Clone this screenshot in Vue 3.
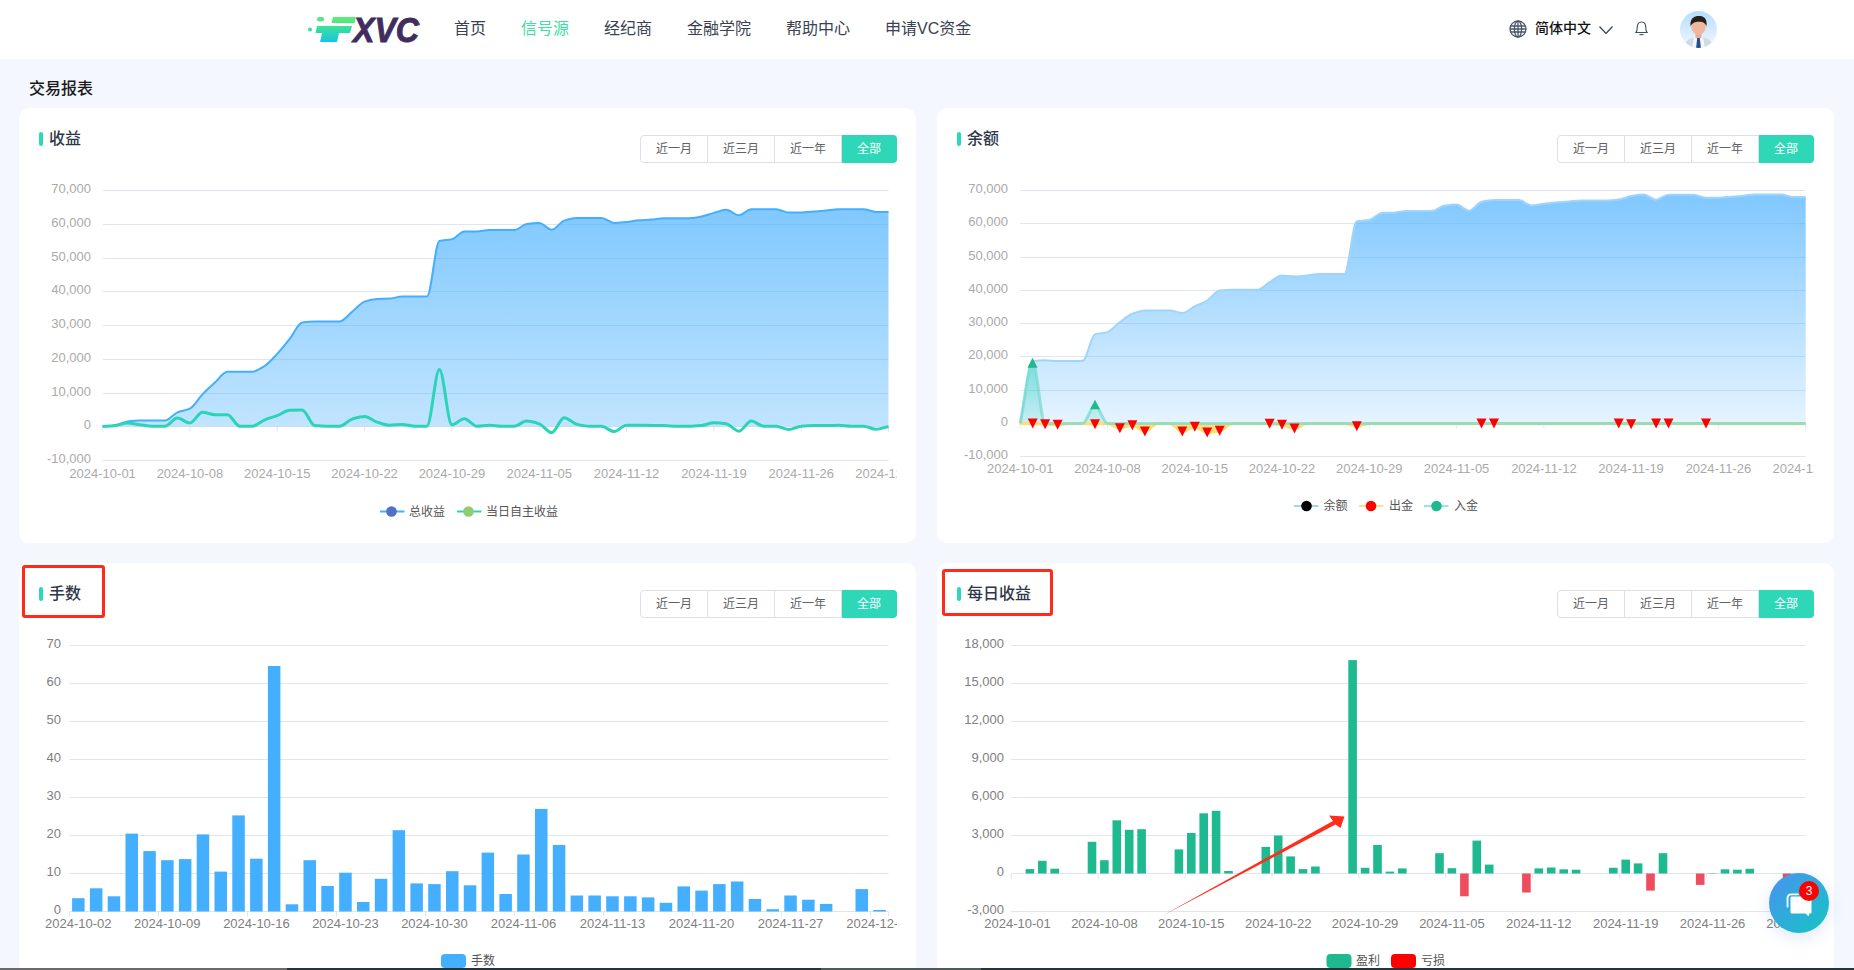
<script setup>
const tabs = ['近一月', '近三月', '近一年', '全部']
const nav = ['首页', '信号源', '经纪商', '金融学院', '帮助中心', '申请VC资金']
const days1 = ['10-01', '10-08', '10-15', '10-22', '10-29', '11-05', '11-12', '11-19', '11-26', '12-03']
const days3 = ['10-02', '10-09', '10-16', '10-23', '10-30', '11-06', '11-13', '11-20', '11-27', '12-04']

const r1 = (n) => Math.round(n * 10) / 10

function mono(pts) {
  const n = pts.length
  const s = []
  for (let i = 0; i < n - 1; i++) s.push((pts[i + 1][1] - pts[i][1]) / (pts[i + 1][0] - pts[i][0]))
  const m = [s[0]]
  for (let i = 1; i < n - 1; i++) m.push(s[i - 1] * s[i] <= 0 ? 0 : (2 * s[i - 1] * s[i]) / (s[i - 1] + s[i]))
  m.push(s[n - 2])
  let d = `M${r1(pts[0][0])} ${r1(pts[0][1])}`
  for (let i = 0; i < n - 1; i++) {
    const h = (pts[i + 1][0] - pts[i][0]) / 3
    d += `C${r1(pts[i][0] + h)} ${r1(pts[i][1] + m[i] * h)} ${r1(pts[i + 1][0] - h)} ${r1(pts[i + 1][1] - m[i + 1] * h)} ${r1(pts[i + 1][0])} ${r1(pts[i + 1][1])}`
  }
  return d
}

function axis(o) {
  const { left, right, top, bottom, labels, zeroIndex } = o
  const step = (bottom - top) / (labels.length - 1)
  const grid = labels.map((t, i) => ({ t, y: Math.round(top + step * i) + 0.5 }))
  return { grid, zeroY: grid[zeroIndex].y, left, right, top, bottom, step }
}

function lineSeries(ax, values, valuePerStep, extra) {
  const dx = (ax.right - ax.left) / (values.length - 1)
  const zero = ax.zeroY
  const pts = values.map((v, i) => [ax.left + dx * i, zero - (v / valuePerStep) * ax.step])
  const line = mono(pts)
  return {
    ...extra,
    line,
    area: `${line}L${r1(ax.right)} ${zero}L${r1(ax.left)} ${zero}Z`
  }
}

/* ---------- 收益 ---------- */
const totalA = [0, .3, 1.5, 1.8, 1.8, 1.8, 4.2, 5.3, 9.5, 13, 16.2, 16.2, 16.2, 18, 21.5, 26, 30.8, 31.1, 31.1, 31.1, 34, 37, 37.8, 37.9, 38.5, 38.5, 38.5, 55, 55.5, 57.8, 57.8, 58.2, 58.2, 58.2, 60, 60.3, 58.3, 61, 61.8, 61.8, 61.8, 60.3, 60.6, 61.1, 61.3, 61.7, 61.7, 61.7, 62.2, 63.3, 64.2, 62.6, 64.4, 64.4, 64.4, 63.4, 63.4, 63.7, 64, 64.4, 64.4, 64.4, 63.6, 63.6]
const dailyA = [0, .3, 1, .5, .1, .1, 2.5, 1, 4.2, 3.5, 3.5, .1, .1, 2, 3.2, 4.8, 4.9, .3, .1, .1, 2.2, 3, 1.3, .4, .6, .1, .1, 16.9, .5, 2.3, .1, .4, .1, .1, 1.6, .8, -1.8, 2.6, .7, .1, .1, -1.5, .4, .4, .3, .3, .05, .05, .3, 1.1, .8, -1.4, 1.6, .1, .1, -.9, .1, .3, .3, .35, .05, .05, -.8, 0]

/* ---------- 余额 ---------- */
const balance = [0, 18.8, 19, 18.8, 18.8, 18.8, 26.8, 27.5, 30.5, 33, 34, 34, 34, 33.2, 35.2, 37, 40, 40.2, 40.2, 40.2, 42.5, 44.5, 44.2, 44.5, 45, 45, 45, 60.8, 61.2, 63.3, 63.4, 63.9, 63.9, 63.9, 65.5, 65.9, 64, 66.7, 67.2, 67.2, 67.2, 65.6, 66.1, 66.5, 66.8, 67.1, 67.1, 67.1, 67.4, 68.4, 68.9, 67.3, 68.8, 68.8, 68.8, 67.9, 67.9, 68.2, 68.5, 68.9, 68.9, 68.9, 68.1, 68.1]
const depositValues = balance.map((_, i) => (i === 1 ? 18.5 : i === 6 ? 5.5 : 0))
const outMarks = [[1, 0], [2, .7], [3, 1.3], [6, .7], [8, 4.7], [9, 1.7], [10, 8], [13, 8], [14, 3.3], [15, 9], [16, 7.3], [20, .3], [21, 1.3], [22, 5], [27, 2.7], [37, 0], [38, 0], [48, 0], [49, .7], [51, 0], [52, 0], [55, 0]]
const outValues = balance.map((_, i) => {
  const hit = outMarks.find((m) => m[0] === i)
  return hit ? -hit[1] / 3.325 : 0
})

/* ---------- 手数 ---------- */
const lots = [3.5, 6.1, 4, 20.5, 15.9, 13.5, 13.8, 20.3, 10.5, 25.3, 13.9, 64.6, 1.9, 13.5, 6.7, 10.2, 2.5, 8.6, 21.4, 7.4, 7.2, 10.6, 6.9, 15.5, 4.6, 15, 27, 17.5, 4.2, 4.2, 4, 4, 3.7, 2.3, 6.6, 5.5, 7.2, 7.9, 3.3, .6, 4.2, 3.1, 2, 0, 5.9, .4]

/* ---------- 每日收益 ---------- */
const profit = {
  1: .35, 2: 1, 3: .38, 6: 2.5, 7: 1.05, 8: 4.2, 9: 3.45, 10: 3.5,
  13: 1.9, 14: 3.2, 15: 4.75, 16: 4.95, 17: .2,
  20: 2.1, 21: 3, 22: 1.35, 23: .35, 24: .55,
  27: 16.85, 28: .45, 29: 2.25, 30: .15, 31: .4,
  34: 1.6, 35: .42, 36: -1.8, 37: 2.6, 38: .7,
  41: -1.5, 42: .4, 43: .47, 44: .33, 45: .3,
  48: .45, 49: 1.1, 50: .8, 51: -1.35, 52: 1.6,
  55: -.9, 56: .03, 57: .33, 58: .3, 59: .37, 62: -.8
}

function tickList(ax, count, every) {
  const dx = (ax.right - ax.left) / count
  const out = []
  for (let i = 0; i <= count; i += every) out.push(r1(ax.left + dx * i))
  out.push(ax.right)
  return out
}

const axA = axis({ left: 102.6, right: 888.5, top: 190, bottom: 460, zeroIndex: 7, labels: ['70,000', '60,000', '50,000', '40,000', '30,000', '20,000', '10,000', '0', '-10,000'] })
const axB = axis({ left: 1020.2, right: 1805.7, top: 190, bottom: 456, zeroIndex: 7, labels: ['70,000', '60,000', '50,000', '40,000', '30,000', '20,000', '10,000', '0', '-10,000'] })
const axC = axis({ left: 69.4, right: 888.5, top: 645, bottom: 911, zeroIndex: 7, labels: ['70', '60', '50', '40', '30', '20', '10', '0'] })
const axD = axis({ left: 1011.3, right: 1805.7, top: 645, bottom: 911, zeroIndex: 6, labels: ['18,000', '15,000', '12,000', '9,000', '6,000', '3,000', '0', '-3,000'] })

const dayDx = (axB.right - axB.left) / 63
const bandC = (axC.right - axC.left) / 46
const bandD = (axD.right - axD.left) / 64

const markersB = [
  ...outMarks.map(([i, depth]) => {
    const x = axB.left + dayDx * i
    const top = axB.zeroY + depth - 5
    return { key: 'o' + i, fill: '#ff0000', points: `${r1(x - 5)},${r1(top)} ${r1(x + 5)},${r1(top)} ${r1(x)},${r1(top + 10)}` }
  }),
  { key: 'a', fill: '#1fb98f', points: '1027.5,367.7 1037.5,367.7 1032.5,357.7' },
  { key: 'b', fill: '#1fb98f', points: '1090,409.2 1100,409.2 1095,399.7' }
]

const cards = [
  {
    id: 'a', title: '收益', box: '', x: 19, y: 163, w: 878, h: 380, ax: axA, color: '#aaaaaa',
    xLabels: days1.map((d, i) => ({ t: '2024-' + d, x: r1(axA.left + 87.33 * i) })), xLabelY: 478,
    ticks: tickList(axA, 63, 7), labelRight: 91,
    gradient: { y1: 206, y2: 427, c: '#44aeff', a: .68, b: .33 },
    series: [
      lineSeries(axA, totalA, 10, { key: 'total', stroke: '#44aeff', width: 2, fill: 'url(#fill-a)' }),
      lineSeries(axA, dailyA, 10, { key: 'daily', stroke: '#2bd4b6', width: 3, fill: 'none' })
    ],
    bars: [], markers: [],
    legend: [
      { t: '总收益', x1: 380, cx: 391.5, tx: 409, line: '#44aeff', dot: '#5470c6' },
      { t: '当日自主收益', x1: 457, cx: 468.5, tx: 486, line: '#2bd4b6', dot: '#91cc75' }
    ],
    legendY: 511.5
  },
  {
    id: 'b', title: '余额', box: '', x: 937, y: 163, w: 877, h: 380, ax: axB, color: '#aaaaaa',
    xLabels: days1.map((d, i) => ({ t: '2024-' + d, x: r1(axB.left + dayDx * 7 * i) })), xLabelY: 473,
    ticks: tickList(axB, 63, 7), labelRight: 1008,
    gradient: { y1: 195, y2: 423, c: '#44aeff', a: .68, b: .14 },
    series: [
      lineSeries(axB, balance, 10, { key: 'bal', stroke: '#a0d4fc', width: 2, fill: 'url(#fill-b)' }),
      lineSeries(axB, outValues, 10, { key: 'out', stroke: '#ffdd70', width: 3, fill: '#ffe078' }),
      lineSeries(axB, depositValues, 10, { key: 'in', stroke: '#78dccb', width: 3, fill: 'url(#fill-teal)', opacity: .75 })
    ],
    bars: [], markers: markersB,
    legend: [
      { t: '余额', x1: 1294, cx: 1306.5, tx: 1323.5, line: '#a0d4fc', dot: '#000000' },
      { t: '出金', x1: 1359, cx: 1371, tx: 1389, line: '#ffe08a', dot: '#ff0000' },
      { t: '入金', x1: 1424, cx: 1436.5, tx: 1454, line: '#92e8dc', dot: '#1fb98f' }
    ],
    legendY: 506
  },
  {
    id: 'c', title: '手数', box: 'box-c', x: 19, y: 618, w: 878, h: 380, ax: axC, color: '#808080',
    xLabels: days3.map((d, i) => ({ t: '2024-' + d, x: r1(axC.left + bandC / 2 + bandC * 5 * i) })), xLabelY: 928,
    ticks: tickList(axC, 46, 5), labelRight: 61,
    gradient: null, series: [], markers: [],
    bars: lots.map((v, i) => ({ key: i, x: r1(axC.left + bandC * i + (bandC - 12.5) / 2), y: r1(axC.zeroY - v * 3.8), w: 12.5, h: r1(v * 3.8), fill: '#44aeff' })),
    rects: [{ t: '手数', x: 441, tx: 471, fill: '#44aeff' }]
  },
  {
    id: 'd', title: '每日收益', box: 'box-d', x: 937, y: 618, w: 877, h: 380, ax: axD, color: '#808080',
    xLabels: days1.map((d, i) => ({ t: '2024-' + d, x: r1(axD.left + bandD / 2 + bandD * 7 * i) })), xLabelY: 928,
    ticks: tickList(axD, 64, 7), labelRight: 1004,
    gradient: null, series: [], markers: [],
    bars: Object.entries(profit).map(([k, v]) => {
      const h = Math.abs(v) * (38 / 3)
      return {
        key: k,
        x: r1(axD.left + bandD * +k + (bandD - 8.6) / 2),
        y: r1(v >= 0 ? axD.zeroY - h : axD.zeroY),
        w: 8.6,
        h: r1(h),
        fill: v >= 0 ? '#1fb98f' : '#ee4d60'
      }
    }),
    rects: [
      { t: '盈利', x: 1326.5, tx: 1356, fill: '#1fb98f' },
      { t: '亏损', x: 1391, tx: 1421, fill: '#ff0000' }
    ],
    arrow: true
  }
]
</script>

<template>
  <div class="page">
    <header class="top">
      <svg class="logo" viewBox="307 14 120 30" width="120" height="30" role="img" aria-label="FXVC">
        <defs>
          <linearGradient id="logo-grad" gradientUnits="userSpaceOnUse" x1="330" y1="15" x2="330" y2="42">
            <stop offset="0" stop-color="#62f06a" />
            <stop offset=".5" stop-color="#35dca6" />
            <stop offset="1" stop-color="#10c4ea" />
          </linearGradient>
        </defs>
        <circle cx="310" cy="28.5" r="2" fill="#3bdca0" />
        <rect x="317" y="16" width="7" height="4.5" rx="2.2" fill="#52e88a" />
        <path d="M333 16H356L354.5 22H331.5Z M317 25H352L350 32H339L337 41H320L322 32H315.5Z" fill="url(#logo-grad)" />
        <text class="logo-word" x="353" y="41" textLength="66" lengthAdjust="spacingAndGlyphs">XVC</text>
      </svg>
      <nav class="nav">
        <a v-for="(n, i) in nav" :key="n" class="nav-item" :class="{ on: i === 1 }">{{ n }}</a>
      </nav>
      <div class="tools">
        <svg class="globe" viewBox="0 0 18 18" width="18" height="18" fill="none" stroke="#4a566b" stroke-width="1.3">
          <circle cx="9" cy="9" r="8" />
          <ellipse cx="9" cy="9" rx="3.6" ry="8" />
          <path d="M9 1V17M1.6 6H16.4M1.6 12H16.4M1 9H17" />
        </svg>
        <span class="lang">简体中文</span>
        <svg class="chev" viewBox="0 0 14 8" width="14" height="8" fill="none" stroke="#3e4a5e" stroke-width="1.3">
          <path d="M.5 .5L7 7.5L13.5 .5" />
        </svg>
        <svg class="bell" viewBox="0 0 13 15" width="13" height="15" fill="none" stroke="#3e4a5e" stroke-width="1.1">
          <path d="M1 11.5C2 10.5 2.2 9.5 2.2 6.5C2.2 3 4 1 6.5 1S10.8 3 10.8 6.5C10.8 9.5 11 10.5 12 11.5Z" />
          <path d="M4.5 13.6H8.5" />
        </svg>
        <svg class="avatar" viewBox="0 0 37 37" width="37" height="37">
          <defs>
            <linearGradient id="ava-bg" x1="0" y1="0" x2="0" y2="1">
              <stop offset="0" stop-color="#b6dcff" />
              <stop offset="1" stop-color="#f2f8ff" />
            </linearGradient>
            <clipPath id="ava-clip"><circle cx="18.5" cy="18.5" r="18.5" /></clipPath>
          </defs>
          <g clip-path="url(#ava-clip)">
            <rect width="37" height="37" fill="url(#ava-bg)" />
            <path d="M4 37C4 30 10 27 16 26H21C28 27 33 30 33 37Z" fill="#cfdae1" />
            <path d="M14 26H23L25 37H12Z" fill="#f4f7fa" />
            <path d="M17.2 27H19.8L20.9 37H16.1Z" fill="#234a8c" />
            <rect x="15.5" y="21" width="6" height="6" fill="#e9b096" />
            <ellipse cx="18.5" cy="15.5" rx="7.2" ry="8.2" fill="#f0b79c" />
            <path d="M10.6 15.5C9.5 7.5 14 5 19 5C24 5 27.6 7.5 26.4 15.5C25.4 12 23 10.8 19 10.8C15 10.8 12 12 10.6 15.5Z" fill="#24211f" />
          </g>
        </svg>
      </div>
    </header>

    <main class="body">
      <h1 class="page-title">交易报表</h1>
      <section class="grid">
        <article v-for="c in cards" :key="c.id" class="card">
          <div class="head">
            <h2 class="card-title"><i class="accent"></i>{{ c.title }}</h2>
            <div class="tabs">
              <span v-for="(t, i) in tabs" :key="t" class="tab" :class="{ active: i === 3 }">{{ t }}</span>
            </div>
          </div>
          <div v-if="c.box" class="mark" :class="c.box"></div>
          <svg class="chart" :width="c.w" :height="c.h" :viewBox="`${c.x} ${c.y} ${c.w} ${c.h}`">
            <defs v-if="c.gradient">
              <linearGradient :id="'fill-' + c.id" gradientUnits="userSpaceOnUse" x1="0" :y1="c.gradient.y1" x2="0" :y2="c.gradient.y2">
                <stop offset="0" :stop-color="c.gradient.c" :stop-opacity="c.gradient.a" />
                <stop offset="1" :stop-color="c.gradient.c" :stop-opacity="c.gradient.b" />
              </linearGradient>
              <linearGradient v-if="c.id === 'b'" id="fill-teal" gradientUnits="userSpaceOnUse" x1="0" y1="360" x2="0" y2="423">
                <stop offset="0" stop-color="#2ed2be" stop-opacity=".7" />
                <stop offset="1" stop-color="#2ed2be" stop-opacity=".2" />
              </linearGradient>
            </defs>

            <line v-for="g in c.ax.grid" :key="g.t" class="gl" :x1="c.ax.left" :x2="c.ax.right" :y1="g.y" :y2="g.y" />
            <text v-for="g in c.ax.grid" :key="'y' + g.t" class="tick" :fill="c.color" :x="c.labelRight" :y="g.y + 2.5" text-anchor="end">{{ g.t }}</text>
            <line v-for="t in c.ticks" :key="'t' + t" class="gl" :x1="t" :x2="t" :y1="c.ax.zeroY" :y2="c.ax.zeroY + 5" />

            <path v-for="s in c.series" :key="s.key + 'a'" v-show="s.fill !== 'none'" :d="s.area" :fill="s.fill" :opacity="s.opacity" />
            <path v-for="s in c.series" :key="s.key" :d="s.line" fill="none" :stroke="s.stroke" :stroke-width="s.width" :opacity="s.opacity" />

            <rect v-for="b in c.bars" :key="b.key" :x="b.x" :y="b.y" :width="b.w" :height="b.h" :fill="b.fill" />
            <polygon v-for="m in c.markers" :key="m.key" :points="m.points" :fill="m.fill" />

            <text v-for="l in c.xLabels" :key="l.t" class="tick" :fill="c.color" :x="l.x" :y="c.xLabelY" text-anchor="middle">{{ l.t }}</text>

            <g v-for="l in c.legend" :key="l.t">
              <line :x1="l.x1" :x2="l.x1 + 24.5" :y1="c.legendY" :y2="c.legendY" :stroke="l.line" stroke-width="2" />
              <circle :cx="l.cx" :cy="c.legendY" r="5.3" :fill="l.dot" />
              <text class="leg" :x="l.tx" :y="c.legendY + 4">{{ l.t }}</text>
            </g>
            <g v-for="l in c.rects" :key="l.t">
              <rect :x="l.x" y="954" width="25" height="14" rx="4" :fill="l.fill" />
              <text class="leg" :x="l.tx" y="964.5">{{ l.t }}</text>
            </g>

            <g v-if="c.arrow">
              <polygon points="1161,916.5 1333,821 1329,815.5 1344.5,816.5 1340.5,828 1335.5,824.5" fill="#ff2d1a" />
            </g>
          </svg>
        </article>
      </section>
    </main>

    <div class="chat">
      <svg viewBox="0 0 30 30" width="30" height="30" fill="none">
        <path d="M3.5 16.5V8.5C3.5 5.8 5 4.3 7.5 4.3H14" stroke="#fff" stroke-width="1.8" stroke-linecap="round" />
        <path d="M8 6.5H26C27 6.5 27.5 7 27.5 8V22C27.5 23 27 23.5 26 23.5H25.5L24.5 26.2L21.5 23.5H8C7 23.5 6.5 23 6.5 22V8C6.5 7 7 6.5 8 6.5Z" fill="#fff" />
      </svg>
      <span class="badge">3</span>
    </div>
    <div class="edge"></div>
  </div>
</template>

<style scoped>
.page {
  height: 970px;
  overflow: hidden;
  position: relative;
  background: #f4f7fe;
  font-family: "Liberation Sans", "Noto Sans CJK SC", sans-serif;
  color: #333;
}
.top {
  height: 59px;
  background: #fff;
  display: flex;
  align-items: center;
  padding: 0 137px 0 307px;
}
.logo { display: block; flex: none; }
.logo-word {
  font-family: "Liberation Sans", sans-serif;
  font-weight: 700;
  font-style: italic;
  font-size: 35px;
  fill: #3f2d5e;
  stroke: #3f2d5e;
  stroke-width: .9;
}
.nav {
  display: flex;
  gap: 35px;
  margin: 0 0 5px 27px;
  font-size: 16px;
  color: #3a4252;
}
.nav-item.on { color: #3ddfa2; }
.tools {
  margin-left: auto;
  display: flex;
  align-items: center;
}
.globe { margin-bottom: 2px; }
.lang {
  margin: 0 0 5px 8px;
  font-size: 14px;
  font-weight: 500;
  color: #111;
}
.chev { margin-left: 8px; margin-top: 1px; }
.bell { margin: 0 0 2px 22px; }
.avatar { margin-left: 32px; }

.page-title {
  margin: 0;
  padding: 20px 0 9px 29px;
  font-size: 16px;
  line-height: 20px;
  font-weight: 500;
  color: #1a1a1a;
}
.grid {
  display: grid;
  grid-template-columns: 1fr 1fr;
  gap: 20px 21px;
  padding: 0 20px 0 19px;
}
.card {
  position: relative;
  height: 435px;
  background: #fff;
  border-radius: 10px;
  overflow: hidden;
}
.head {
  display: flex;
  justify-content: space-between;
  align-items: flex-start;
  padding: 19px 20px 0;
  height: 55px;
  box-sizing: border-box;
}
.card:nth-child(odd) .head { padding-right: 19px; }
.card-title {
  margin: 0;
  display: flex;
  align-items: center;
  gap: 6px;
  font-size: 16px;
  line-height: 24px;
  font-weight: 500;
  color: #2d3748;
}
.accent {
  width: 4px;
  height: 14px;
  border-radius: 2px;
  background: #2dd7b8;
}
.tabs {
  display: flex;
  margin-top: 8px;
  font-size: 12px;
  line-height: 26px;
}
.tab {
  padding: 0 15px;
  border: 1px solid #dcdfe6;
  border-left: 0;
  color: #606266;
  background: #fff;
}
.tab:first-child {
  border-left: 1px solid #dcdfe6;
  border-radius: 4px 0 0 4px;
}
.tab:last-child { border-radius: 0 4px 4px 0; }
.tab.active {
  background: #2dd7b8;
  border-color: #2dd7b8;
  color: #fff;
}
.chart { display: block; overflow: hidden; }
.gl { stroke: #e0e6f1; stroke-width: 1; }
.tick { font-size: 13px; }
.leg { font-size: 12px; fill: #555; }
.mark {
  position: absolute;
  border: 3px solid #ff2a1a;
  border-radius: 3px;
  box-sizing: border-box;
}
.box-c { left: 3px; top: 2px; width: 83px; height: 53px; }
.box-d { left: 5px; top: 6px; width: 111px; height: 47px; }
.chat {
  position: absolute;
  left: 1769px;
  top: 873px;
  width: 60px;
  height: 60px;
  border-radius: 50%;
  background: linear-gradient(135deg, #4a92f0, #12c6c4);
  box-shadow: 0 4px 16px rgba(60, 120, 200, .18);
  display: flex;
  align-items: center;
  justify-content: center;
}
.chat svg { margin-top: 4px; }
.badge {
  position: absolute;
  left: 30px;
  top: 8px;
  width: 20px;
  height: 20px;
  border-radius: 50%;
  background: #ff0000;
  color: #fff;
  font-size: 12px;
  line-height: 20px;
  text-align: center;
}
.edge {
  position: absolute;
  left: 0;
  right: 0;
  bottom: 0;
  height: 2px;
  background: linear-gradient(90deg, #6a6a6a 0 287px, #25333a 287px 821px, #4c5a5c 821px 981px, #25333a 981px);
}
</style>
